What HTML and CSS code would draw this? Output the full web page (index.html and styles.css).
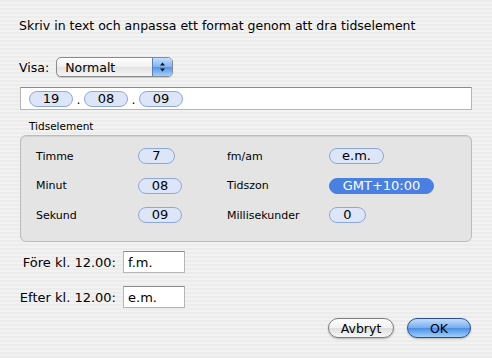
FILE: index.html
```html
<!DOCTYPE html>
<html lang="sv">
<head>
    <meta charset="UTF-8">
    <title>Tidsformat</title>
    <link rel="stylesheet" href="styles.css">
</head>
<body>
    <div class="dialog">
        <p class="prompt">Skriv in text och anpassa ett format genom att dra tidselement</p>

        <div class="show-row">
            <span class="show-label">Visa:</span>
            <div class="popup">
                <span class="popup-text">Normalt</span>
                <span class="stepper">
                    <svg width="9" height="12" viewBox="0 0 9 12">
                        <path d="M4.5 1.5 L7 4.5 L2 4.5 Z" fill="#111"/>
                        <path d="M4.5 10.5 L7 7.5 L2 7.5 Z" fill="#111"/>
                    </svg>
                </span>
            </div>
        </div>

        <div class="format-field">
            <span class="token wide">19</span><span class="sep">.</span><span class="token wide">08</span><span class="sep">.</span><span class="token wide">09</span>
        </div>

        <div class="group">
            <div class="group-title">Tidselement</div>
            <div class="group-box">
                <span class="el-label">Timme</span>
                <span class="token small">7</span>
                <span class="el-label">fm/am</span>
                <span class="token medium">e.m.</span>

                <span class="el-label">Minut</span>
                <span class="token wide">08</span>
                <span class="el-label">Tidszon</span>
                <span class="token zone">GMT+10:00</span>

                <span class="el-label">Sekund</span>
                <span class="token wide">09</span>
                <span class="el-label">Millisekunder</span>
                <span class="token small">0</span>
            </div>
        </div>

        <div class="ampm">
            <label for="am">Före kl. 12.00:</label>
            <input type="text" id="am" value="f.m.">
            <label for="pm">Efter kl. 12.00:</label>
            <input type="text" id="pm" value="e.m.">
        </div>

        <div class="buttons">
            <button class="btn">Avbryt</button>
            <button class="btn btn-default">OK</button>
        </div>
    </div>
</body>
</html>
```

FILE: styles.css
```css
* {
    margin: 0;
    padding: 0;
    box-sizing: border-box;
    font-family: 'DejaVu Sans', 'Liberation Sans', sans-serif;
}

body {
    width: 492px;
    height: 358px;
    overflow: hidden;
    color: #000;
    background: repeating-linear-gradient(#ececec 0, #ececec 2px, #f2f2f2 2px, #f2f2f2 4px);
}

.dialog {
    padding: 18px 20px 0 20px;
}

.prompt {
    font-size: 12.5px;
    line-height: 16px;
    margin-left: -1px;
}

.show-row {
    display: flex;
    align-items: center;
    gap: 7px;
    margin-top: 23px;
    margin-left: -1px;
}

.show-label {
    font-size: 12.5px;
}

.popup {
    display: flex;
    align-items: center;
    width: 117px;
    height: 20px;
    border: 1px solid #8a8a8a;
    border-radius: 5px;
    background: linear-gradient(#ffffff, #f0f0f0 50%, #e2e2e2 51%, #f6f6f6);
    box-shadow: 0 1px 1px rgba(0, 0, 0, 0.15);
    overflow: hidden;
}

.popup-text {
    flex: 1;
    padding-left: 8px;
    font-size: 12.5px;
}

.stepper {
    display: flex;
    align-items: center;
    justify-content: center;
    width: 20px;
    height: 100%;
    border-left: 1px solid #5c7fb8;
    background: linear-gradient(#c4defc, #7fb3f2 50%, #5596ea 51%, #9fd0fc);
}

.format-field {
    display: flex;
    align-items: center;
    height: 23px;
    margin-top: 10px;
    padding-left: 8px;
    background: #fff;
    border: 1px solid #b5b5b5;
    border-top-color: #8a8a8a;
}

.token {
    display: inline-flex;
    align-items: center;
    justify-content: center;
    height: 16px;
    border: 1px solid #8ea8d8;
    border-radius: 8px;
    background: #dce6f8;
    font-size: 13px;
    line-height: 14px;
}

.token.wide {
    width: 44px;
}

.token.small {
    width: 37px;
}

.token.medium {
    width: 55px;
}

.token.zone {
    width: 105px;
    color: #fff;
    background: #4a80e2;
    border-color: #4a80e2;
}

.sep {
    width: 11px;
    text-align: center;
    font-size: 12.5px;
    line-height: 14px;
    padding-top: 3px;
}

.group {
    margin-top: 9px;
}

.group-title {
    font-size: 10.5px;
    line-height: 14px;
    padding-left: 9px;
    margin-bottom: 2px;
}

.group-box {
    display: grid;
    grid-template-columns: 102px 89px 102px auto;
    grid-auto-rows: 16px;
    row-gap: 13.5px;
    align-items: center;
    justify-items: start;
    padding: 12px 0 18px 15px;
    background: #e4e4e4;
    border: 1px solid #bcbcbc;
    border-radius: 6px;
    box-shadow: inset 0 1px 1px rgba(0, 0, 0, 0.08);
}

.el-label {
    font-size: 11px;
}

.ampm {
    display: grid;
    grid-template-columns: 100px 62px;
    column-gap: 7px;
    row-gap: 13px;
    align-items: center;
    margin-top: 9px;
    margin-left: -4px;
}

.ampm label {
    font-size: 13px;
    text-align: right;
    white-space: nowrap;
}

.ampm input {
    width: 62px;
    height: 22px;
    padding: 0 4px;
    border: 1px solid #b5b5b5;
    border-top-color: #8a8a8a;
    background: #fff;
    font-size: 13px;
    outline: none;
}

.buttons {
    display: flex;
    justify-content: flex-end;
    gap: 13px;
    margin-top: 10px;
    padding-right: 1px;
}

.btn {
    width: 66px;
    height: 20px;
    border: 1px solid #7d7d7d;
    border-radius: 10px;
    background: linear-gradient(#fdfdfd, #f0f0f0 50%, #dedede 51%, #f8f8f8);
    box-shadow: 0 1px 2px rgba(0, 0, 0, 0.25);
    font-size: 12.5px;
    cursor: pointer;
}

.btn-default {
    width: 64px;
    border-color: #2c4f8e;
    background: linear-gradient(#c3dcfa, #74acf0 50%, #4a8fe6 51%, #9fd0fc);
}
```
